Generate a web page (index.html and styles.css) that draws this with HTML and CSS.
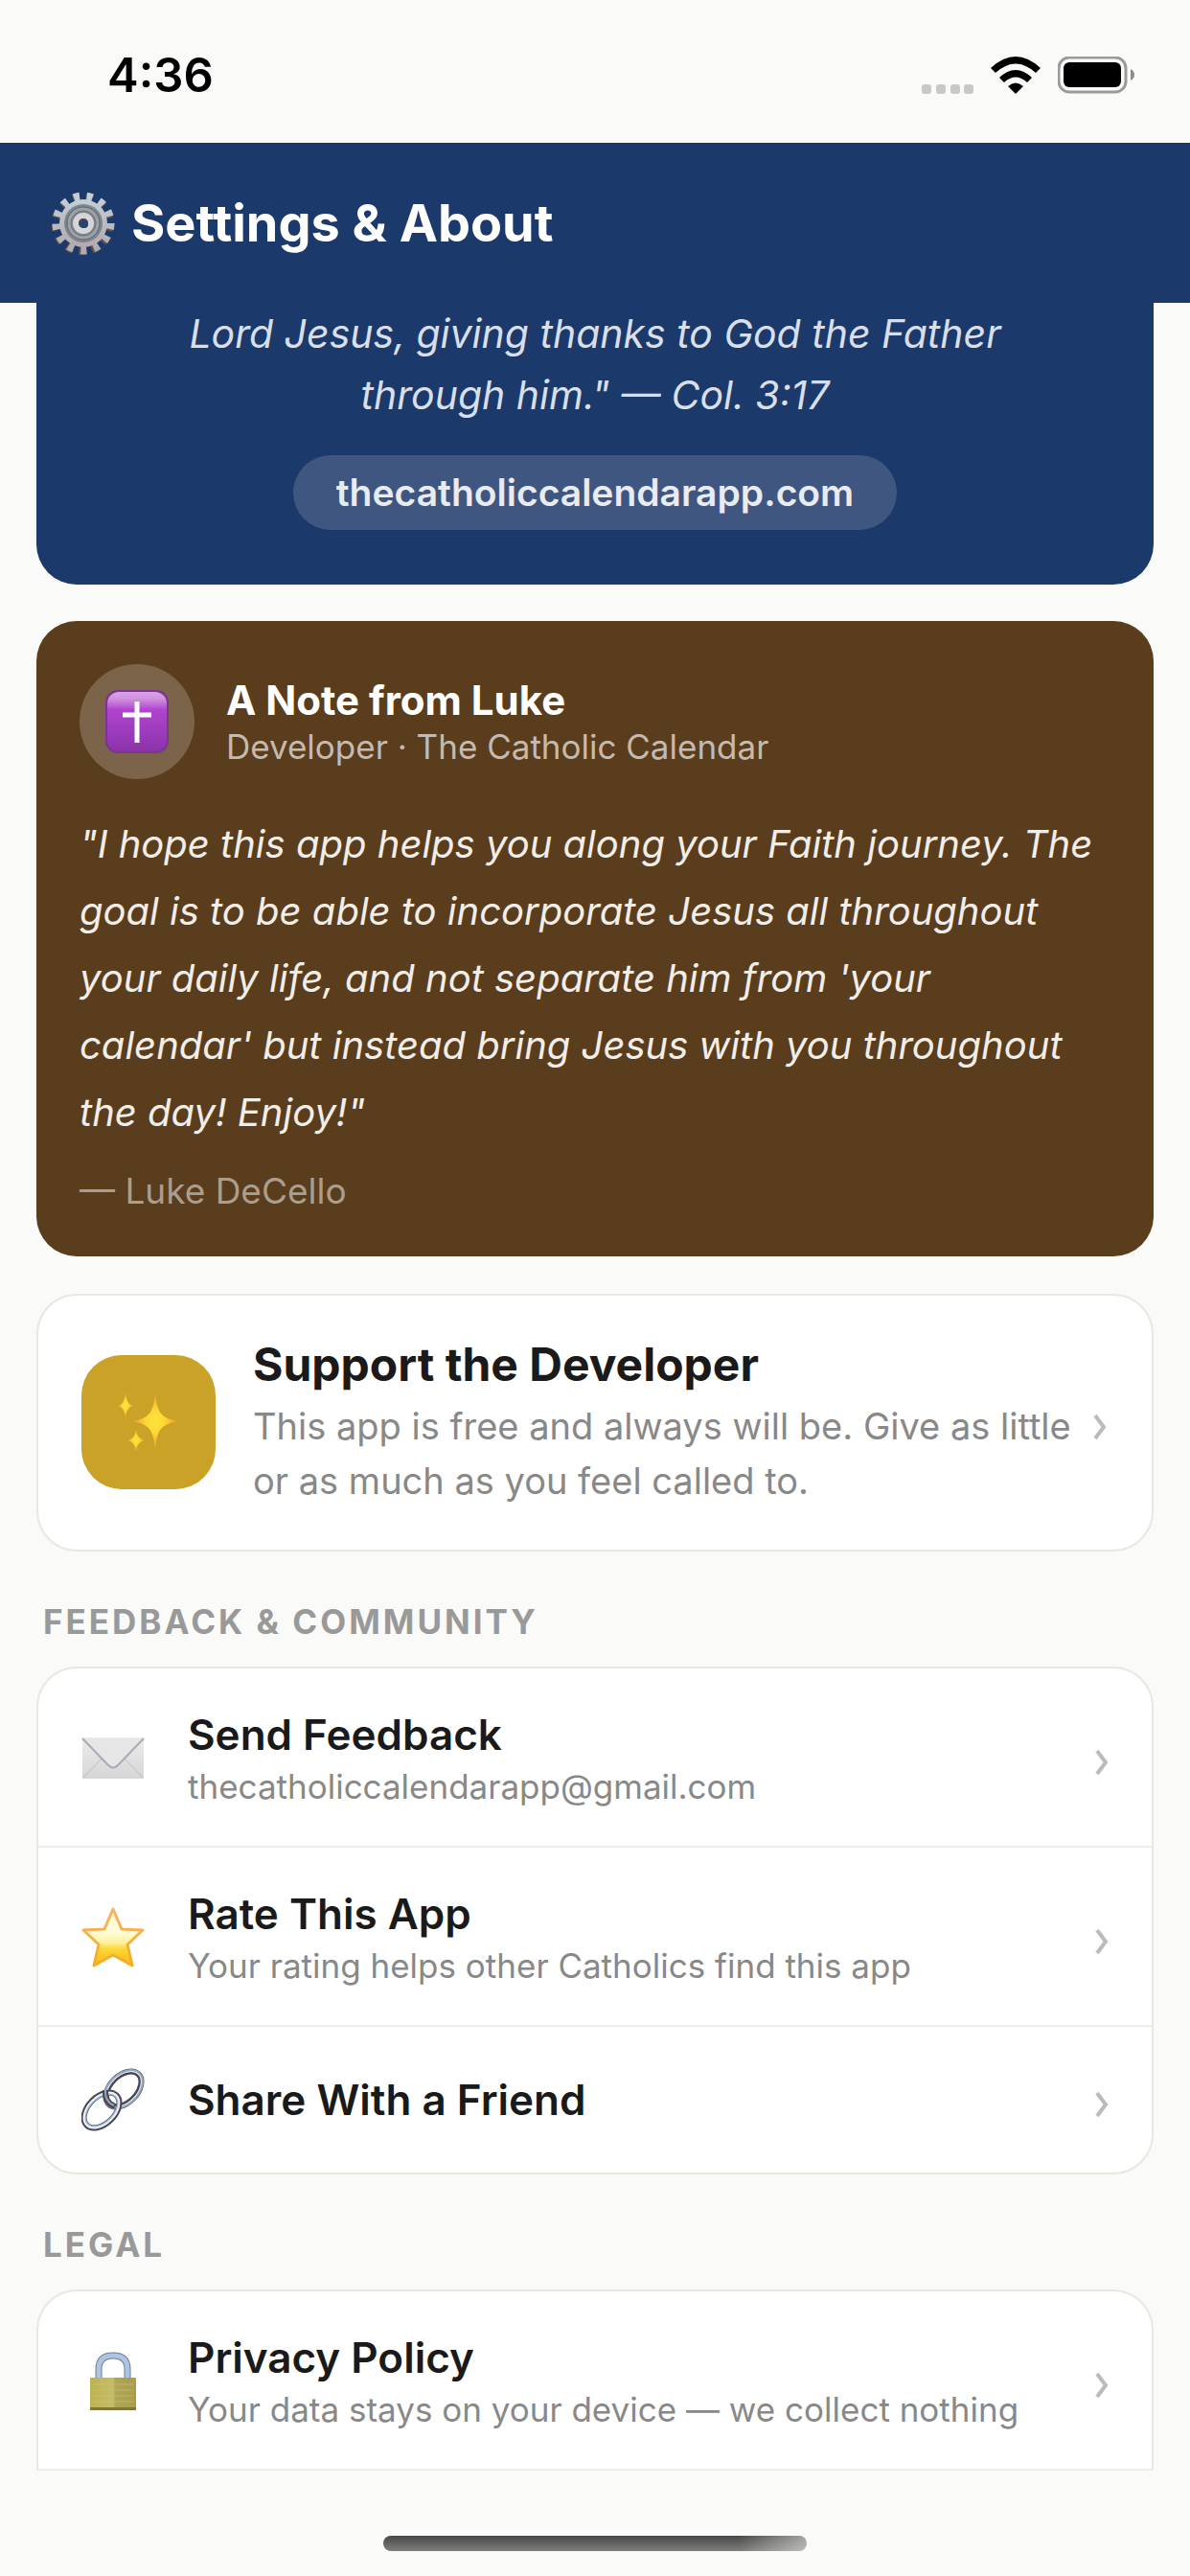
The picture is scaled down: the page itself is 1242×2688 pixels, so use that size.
FILE: index.html
```html
<!DOCTYPE html>
<html lang="en">

<head>
    <meta charset="UTF-8">
    <meta name="viewport" content="width=device-width, initial-scale=1.0">
    <title>Settings &amp; About</title>
    <link rel="stylesheet" href="styles.css">
</head>

<body>
    <div class="status-bar">
        <span class="time">4:36</span>
        <div class="status-icons">
            <svg width="54" height="10" viewBox="0 0 54 10" fill="#c8c8c6">
                <rect width="10" height="10" rx="3" />
                <rect x="15" width="10" height="10" rx="3" />
                <rect x="30" width="10" height="10" rx="3" />
                <rect x="44" width="10" height="10" rx="3" />
            </svg>
            <svg class="wifi" width="52" height="39" viewBox="0 0 52 39">
                <path d="M0 12Q26 -12 52 12L47 17Q26 -2 5 17Z" />
                <path d="M9 22Q26 6 43 22L38 27Q26 16 14 27Z" />
                <path d="M18 31Q26 24 34 31L26 39Z" />
            </svg>
            <svg width="80" height="39" viewBox="0 0 80 39">
                <rect x="1" y="1" width="70" height="36" rx="11" fill="none" stroke="#9b9b9a" stroke-width="3" />
                <rect x="6" y="6" width="60" height="26" rx="6" />
                <path d="M76 13q4 2 4 6t-4 6z" fill="#8c8c8b" />
            </svg>
        </div>
    </div>

    <header class="header">
        <svg class="gear" width="66" height="66" viewBox="-33 -33 66 66">
            <defs>
                <linearGradient id="steel" x1="0" y1="0" x2="0" y2="1">
                    <stop offset="0" stop-color="#c3ced6" />
                    <stop offset="1" stop-color="#b3a9b0" />
                </linearGradient>
            </defs>
            <!-- dark copy first, gives the gear its thickness -->
            <circle r="28" cx="-1" cy="1" fill="none" stroke="#5a5450" stroke-width="9" stroke-dasharray="7 6.53" />
            <circle r="28" fill="none" stroke="url(#steel)" stroke-width="9" stroke-dasharray="6 7.53" />
            <circle r="25" fill="url(#steel)" />
            <circle r="20" fill="#7e868b" />
            <circle r="17" fill="#9ba3a8" stroke="#5e666c" stroke-width="1" />
            <circle r="13" fill="#84898e" stroke="#6a7076" stroke-width="1" />
            <circle r="8" fill="#4b6180" stroke="#d3d5d9" stroke-width="6" />
            <circle r="5" fill="#51443e" />
            <circle r="4" cx="1" cy="1" fill="#244373" />
        </svg>
        <h1>Settings &amp; About</h1>
    </header>

    <main class="content">
        <section class="verse-card">
            <p>Lord Jesus, giving thanks to God the Father through him." — Col. 3:17</p>
            <a class="site-link" href="#">thecatholiccalendarapp.com</a>
        </section>

        <section class="note-card">
            <div class="note-head">
                <div class="avatar">
                    <svg width="66" height="66" viewBox="0 0 66 66">
                        <defs>
                            <linearGradient id="purple" x1="0" y1="0" x2="0" y2="1">
                                <stop offset="0" stop-color="#d9a3e6" />
                                <stop offset=".12" stop-color="#cf90df" />
                                <stop offset=".3" stop-color="#b044cf" />
                                <stop offset="1" stop-color="#8b33aa" />
                            </linearGradient>
                        </defs>
                        <rect width="66" height="66" rx="13" fill="#7d3391" />
                        <rect x="2" y="2" width="62" height="62" rx="12" fill="url(#purple)" />
                        <path d="M33 12v43M18 26h30" stroke="#fff" stroke-width="5" />
                    </svg>
                </div>
                <div>
                    <h2>A Note from Luke</h2>
                    <p class="role">Developer · The Catholic Calendar</p>
                </div>
            </div>
            <p class="quote">"I hope this app helps you along your Faith journey. The goal is to be able to incorporate Jesus all throughout your daily life, and not separate him from 'your calendar' but instead bring Jesus with you throughout the day! Enjoy!"</p>
            <p class="author">— Luke DeCello</p>
        </section>

        <a class="support-card" href="#">
            <span class="support-icon">
                <svg width="66" height="66" viewBox="0 0 66 66">
                    <defs>
                        <radialGradient id="spark">
                            <stop offset="0" stop-color="#ffe23d" />
                            <stop offset=".4" stop-color="#fdd835" />
                            <stop offset="1" stop-color="#e8912f" />
                        </radialGradient>
                    </defs>
                    <g fill="url(#spark)">
                        <path d="M40 1C42 24 46 29 65 32C46 35 42 40 40 63C38 40 34 35 15 32C34 29 38 24 40 1Z" />
                        <path d="M9 1C10 12 12 15 18 16C12 17 10 20 9 30C8 20 6 17 0 16C6 15 8 12 9 1Z" />
                        <path d="M20 39C21 48 23 51 30 52C23 53 21 56 20 65C19 56 17 53 10 52C17 51 19 48 20 39Z" />
                    </g>
                </svg>
            </span>
            <span class="support-text">
                <strong>Support the Developer</strong>
                <span>This app is free and always will be. Give as little or as much as you feel called to.</span>
            </span>
            <svg class="chevron" width="16" height="26" viewBox="0 0 16 26"><path d="M3 1L12 13L3 25" /></svg>
        </a>

        <h3 class="section-title">FEEDBACK &amp; COMMUNITY</h3>
        <nav class="list">
            <a class="row" href="#">
                <svg class="row-icon" width="66" height="66" viewBox="0 0 66 66">
                    <defs>
                        <linearGradient id="paper" x1="0" y1="0" x2="0" y2="1">
                            <stop offset="0" stop-color="#ececec" />
                            <stop offset="1" stop-color="#d6d6d6" />
                        </linearGradient>
                    </defs>
                    <rect x="1" y="12" width="64" height="43" rx="1" fill="url(#paper)" />
                    <path d="M2 54L21 34M64 54L45 34" stroke="#bdbdbd" stroke-width="1" />
                    <path d="M1 13L28 41Q33 46 38 41L65 13" fill="#e6e6e6" stroke="#a9acb4" stroke-width="2" />
                </svg>
                <span class="row-text">
                    <strong>Send Feedback</strong>
                    <span>thecatholiccalendarapp@gmail.com</span>
                </span>
                <svg class="chevron" width="16" height="26" viewBox="0 0 16 26"><path d="M3 1L12 13L3 25" /></svg>
            </a>
            <a class="row" href="#">
                <svg class="row-icon" width="66" height="66" viewBox="0 0 66 66">
                    <defs>
                        <linearGradient id="gold" x1="0" y1="0" x2="0" y2="1">
                            <stop offset="0" stop-color="#fff6d8" />
                            <stop offset=".4" stop-color="#fffddb" />
                            <stop offset=".6" stop-color="#fdf09a" />
                            <stop offset=".7" stop-color="#fbd93a" />
                            <stop offset="1" stop-color="#f7b413" />
                        </linearGradient>
                        <linearGradient id="goldEdge" x1="0" y1="0" x2="0" y2="1">
                            <stop offset="0" stop-color="#f5b469" />
                            <stop offset="1" stop-color="#f4ae22" />
                        </linearGradient>
                    </defs>
                    <path d="M33 4L42 25L64 26L48 41L53 63L33 52L13 63L18 41L2 26L24 25Z" fill="url(#gold)" stroke="url(#goldEdge)" stroke-width="3" stroke-linejoin="round" />
                </svg>
                <span class="row-text">
                    <strong>Rate This App</strong>
                    <span>Your rating helps other Catholics find this app</span>
                </span>
                <svg class="chevron" width="16" height="26" viewBox="0 0 16 26"><path d="M3 1L12 13L3 25" /></svg>
            </a>
            <a class="row row-single" href="#">
                <svg class="row-icon" width="66" height="66" viewBox="0 0 66 66" fill="none">
                    <g transform="rotate(-45 44 22)">
                        <ellipse cx="44" cy="22" rx="22" ry="14" stroke="#4c4650" stroke-width="6" />
                        <ellipse cx="44" cy="22" rx="23" ry="15" stroke="#8fa9c6" stroke-width="3" />
                        <ellipse cx="44" cy="22" rx="22" ry="14" stroke="#e6edf5" stroke-width="1" />
                    </g>
                    <g transform="rotate(-45 21 44)">
                        <ellipse cx="21" cy="44" rx="22" ry="14" stroke="#4c4650" stroke-width="6" />
                        <ellipse cx="21" cy="44" rx="21" ry="13" stroke="#94b4d8" stroke-width="3" />
                        <ellipse cx="21" cy="44" rx="22" ry="14" stroke="#f0f3f7" stroke-width="2" />
                    </g>
                    <path d="M25 23Q24 36 35 40" stroke="#4c4650" stroke-width="6" />
                    <path d="M25 22Q24 35 34 39" stroke="#8fa5bd" stroke-width="2" />
                </svg>
                <span class="row-text">
                    <strong>Share With a Friend</strong>
                </span>
                <svg class="chevron" width="16" height="26" viewBox="0 0 16 26"><path d="M3 1L12 13L3 25" /></svg>
            </a>
        </nav>

        <h3 class="section-title">LEGAL</h3>
        <nav class="list list-cut">
            <a class="row" href="#">
                <svg class="row-icon" width="66" height="66" viewBox="0 0 66 66">
                    <defs>
                        <linearGradient id="brass" x1="0" y1="0" x2="1" y2="0">
                            <stop offset="0" stop-color="#bdb350" />
                            <stop offset=".5" stop-color="#c6bc69" />
                            <stop offset=".55" stop-color="#b1a656" />
                            <stop offset="1" stop-color="#a99d4c" />
                        </linearGradient>
                    </defs>
                    <path d="M18 36V21Q18 7 33 7Q48 7 48 21V36" fill="none" stroke="#777c85" stroke-width="7" />
                    <path d="M18 36V21Q18 7 33 7Q48 7 48 21V36" fill="none" stroke="#abc6e5" stroke-width="5" />
                    <rect x="9" y="30" width="48" height="34" rx="1" fill="url(#brass)" />
                    <path d="M12 37h42M12 43h42M12 49h42M12 55h42" stroke="#ccc37a" stroke-width="1" opacity=".6" />
                    <rect x="9" y="61" width="48" height="3" fill="#827632" />
                </svg>
                <span class="row-text">
                    <strong>Privacy Policy</strong>
                    <span>Your data stays on your device — we collect nothing</span>
                </span>
                <svg class="chevron" width="16" height="26" viewBox="0 0 16 26"><path d="M3 1L12 13L3 25" /></svg>
            </a>
        </nav>
    </main>

    <footer class="home-area">
        <div class="home-indicator"></div>
    </footer>
</body>

</html>
```
FILE: styles.css
```css
* {
    box-sizing: border-box;
}

body {
    margin: 0;
    min-height: 100vh;
    display: flex;
    flex-direction: column;
    background: #fafaf8;
    color: #1a1a1a;
    font-family: Inter, "Liberation Sans", sans-serif;
}

h1,
h2,
h3,
p {
    margin: 0;
}

a {
    color: inherit;
    text-decoration: none;
}

svg {
    display: block;
    flex-shrink: 0;
}

/* status bar */
.status-bar {
    display: flex;
    justify-content: space-between;
    padding: 48px 58px 39px 112px;
}

.time {
    color: #000;
    font-size: 49px;
    font-weight: 600;
    line-height: 62px;
}

.status-icons {
    display: flex;
    align-items: flex-end;
    gap: 18px;
    height: 50px;
}

/* header */
.header {
    display: flex;
    align-items: center;
    gap: 17px;
    min-height: 167px;
    padding: 0 54px;
    background: #1b3a6b;
    color: #fff;
}

.header h1 {
    font-size: 54px;
    font-weight: 700;
}

.content {
    flex: 1;
    padding: 0 38px;
}

/* verse card */
.verse-card {
    display: flex;
    flex-direction: column;
    align-items: center;
    gap: 31px;
    padding: 0 140px 57px;
    background: #1b3a6b;
    border-radius: 0 0 42px 42px;
    color: #d9dfe8;
    text-align: center;
}

.verse-card p {
    font-size: 41px;
    font-style: italic;
    line-height: 64px;
}

.site-link {
    padding: 0 45px;
    border-radius: 39px;
    background: #3f5780;
    color: #e8ebf0;
    font-size: 39px;
    font-weight: 600;
    line-height: 78px;
}

/* note card */
.note-card {
    margin-top: 38px;
    padding: 45px;
    border-radius: 42px;
    background: #5a3d1c;
}

.note-head {
    display: flex;
    align-items: center;
    gap: 33px;
}

.avatar {
    display: flex;
    align-items: center;
    justify-content: center;
    width: 120px;
    height: 120px;
    border-radius: 50%;
    background: #7b6449;
}

.note-head h2 {
    padding-top: 2px;
    color: #fff;
    font-size: 42px;
    font-weight: 700;
    line-height: 50px;
}

.role {
    color: #c5bab0;
    font-size: 35px;
    line-height: 46px;
}

.quote {
    margin-top: 33px;
    color: #f1eeea;
    font-size: 40px;
    font-style: italic;
    line-height: 70px;
}

.author {
    margin-top: 24px;
    color: #ac9e8e;
    font-size: 37px;
    line-height: 46px;
}

/* support card */
.support-card {
    display: flex;
    align-items: center;
    gap: 22px;
    margin-top: 39px;
    padding: 42px 46px 43px 45px;
    border: 2px solid #ebe6de;
    border-radius: 42px;
    background: #fff;
}

.support-icon {
    display: flex;
    align-items: center;
    justify-content: center;
    flex-shrink: 0;
    width: 140px;
    height: 140px;
    margin-right: 17px;
    border-radius: 42px;
    background: #c9a227;
}

.support-text {
    flex: 1;
    color: #888;
    font-size: 38px;
    line-height: 57px;
}

.support-text strong {
    display: block;
    margin-bottom: 6px;
    color: #1a1a1a;
    font-size: 48px;
    font-weight: 700;
    line-height: 60px;
}

.chevron {
    margin-top: 10px;
    fill: none;
    stroke: #bbb;
    stroke-width: 4;
}

/* lists */
.section-title {
    padding: 50px 7px 24px;
    color: #999;
    font-size: 35px;
    font-weight: 700;
    letter-spacing: 3px;
    line-height: 46px;
}

.list {
    border: 2px solid #ebe6de;
    border-radius: 42px;
    background: #fff;
}

.list-cut {
    border-bottom: 0;
    border-radius: 42px 42px 0 0;
}

.row {
    display: flex;
    align-items: center;
    gap: 45px;
    min-height: 187px;
    padding: 0 44px 0 45px;
    border-bottom: 2px solid #f1ece6;
}

.row-single {
    min-height: 152px;
    border-bottom: 0;
}

.row-text {
    flex: 1;
    color: #888;
    font-size: 35px;
    line-height: 48px;
}

.row-text strong {
    display: block;
    color: #1a1a1a;
    font-size: 44px;
    font-weight: 600;
    line-height: 60px;
}

.row-text span {
    display: block;
}

/* home indicator */
.home-area {
    padding: 67px 0 26px;
}

.home-indicator {
    width: 442px;
    max-width: 60%;
    height: 16px;
    margin: 0 auto;
    border-radius: 8px;
    background: linear-gradient(90deg, transparent 84%, rgba(250, 250, 248, 0.5)), linear-gradient(#484848, #7e7e7d);
}
```
